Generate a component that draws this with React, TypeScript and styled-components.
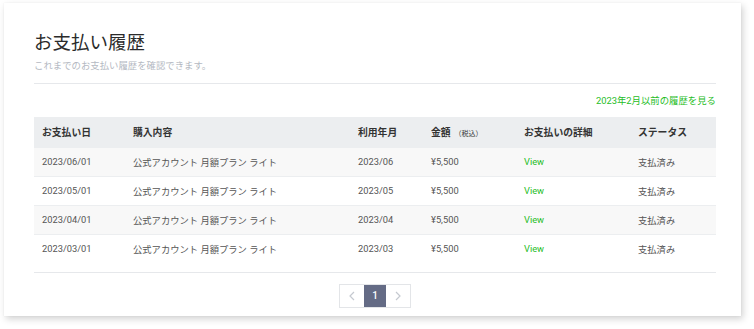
import React from "react";
import styled, { createGlobalStyle } from "styled-components";

const Global = createGlobalStyle`
  html, body { margin: 0; padding: 0; background: #ffffff; }
  body { font-family: Roboto, "Noto Sans CJK JP", sans-serif; }
`;

const Page = styled.div`
  width: 754px;
  height: 329px;
  padding: 3px 0 0 4px;
  box-sizing: border-box;
`;

const Card = styled.div`
  width: 737px;
  height: 313px;
  background: #fff;
  box-sizing: border-box;
  padding: 26px 25px 0 30px;
  box-shadow: 2px 3px 7px rgba(0, 0, 0, 0.18), 0 0 1px rgba(0, 0, 0, 0.08);
`;

const Title = styled.h1`
  margin: 0;
  font-size: 18.5px;
  font-weight: 400;
  color: #2b2b2b;
  line-height: 24px;
  font-family: "Noto Sans CJK JP", sans-serif;
`;

const Sub = styled.p`
  margin: 5px 0 0;
  font-size: 9.4px;
  line-height: 14px;
  color: #b4b9c2;
  font-family: "Noto Sans CJK JP", sans-serif;
`;

const Divider = styled.hr<{ $top: number }>`
  margin: ${(p) => p.$top}px 0 0;
  border: 0;
  border-top: 1px solid #e6e8eb;
`;

const LinkRow = styled.div`
  display: flex;
  justify-content: flex-end;
  margin-top: 9px;
  height: 16px;
`;

const GreenLink = styled.a`
  font-size: 9.4px;
  color: #1fbd1f;
  text-decoration: none;
  line-height: 16px;
`;

const Table = styled.table`
  margin-top: 8px;
  width: 100%;
  border-collapse: collapse;
  table-layout: fixed;
  font-size: 9.3px;
`;

const Th = styled.th<{ $w: number }>`
  width: ${(p) => p.$w}px;
  text-align: left;
  font-weight: 700;
  font-size: 9.8px;
  color: #333;
  background: #eceef0;
  height: 30px;
  padding: 0 0 0 8px;
  box-sizing: border-box;
  font-family: "Noto Sans CJK JP", sans-serif;
`;

const Small = styled.span`
  font-size: 7px;
  font-weight: 400;
  margin-left: 4px;
`;

const Tr = styled.tr<{ $alt: boolean }>`
  background: ${(p) => (p.$alt ? "#f8f8f8" : "#ffffff")};
  border-top: 1px solid #eceef0;
`;

const Td = styled.td<{ $green?: boolean }>`
  height: 28px;
  padding: 0 0 0 8px;
  color: ${(p) => (p.$green ? "#1fbd1f" : "#555")};
  font-family: Roboto, "Noto Sans CJK JP", sans-serif;
`;

const Pager = styled.div`
  display: flex;
  justify-content: center;
  margin-top: 11px;
`;

const PagerBox = styled.div`
  display: flex;
  border: 1px solid #e3e5e8;
  height: 22px;
`;

const PageBtn = styled.div<{ $active?: boolean }>`
  width: ${(p) => (p.$active ? 22 : 24)}px;
  display: flex;
  align-items: center;
  justify-content: center;
  background: ${(p) => (p.$active ? "#646b85" : "#fff")};
  color: ${(p) => (p.$active ? "#fff" : "#c5c9d0")};
  font-size: 10px;
  font-weight: 500;
`;

const rows = [
  ["2023/06/01", "2023/06"],
  ["2023/05/01", "2023/05"],
  ["2023/04/01", "2023/04"],
  ["2023/03/01", "2023/03"],
];

const Chevron = ({ dir }: { dir: "l" | "r" }) => (
  <svg width="6" height="10" viewBox="0 0 6 10">
    <path
      d={dir === "l" ? "M5 1 L1 5 L5 9" : "M1 1 L5 5 L1 9"}
      fill="none"
      stroke="#c5c9d0"
      strokeWidth="1.2"
    />
  </svg>
);

export default function App() {
  return (
    <Page>
      <Global />
      <Card>
        <Title>お支払い履歴</Title>
        <Sub>これまでのお支払い履歴を確認できます。</Sub>
        <Divider $top={11} />
        <LinkRow>
          <GreenLink href="#">2023年2月以前の履歴を見る</GreenLink>
        </LinkRow>
        <Table>
          <thead>
            <tr>
              <Th $w={91}>お支払い日</Th>
              <Th $w={225}>購入内容</Th>
              <Th $w={73}>利用年月</Th>
              <Th $w={93}>
                金額<Small>（税込）</Small>
              </Th>
              <Th $w={114}>お支払いの詳細</Th>
              <Th $w={86}>ステータス</Th>
            </tr>
          </thead>
          <tbody>
            {rows.map((r, i) => (
              <Tr key={r[0]} $alt={i % 2 === 0}>
                <Td>{r[0]}</Td>
                <Td>公式アカウント 月額プラン ライト</Td>
                <Td>{r[1]}</Td>
                <Td>¥5,500</Td>
                <Td $green>View</Td>
                <Td>支払済み</Td>
              </Tr>
            ))}
          </tbody>
        </Table>
        <Divider $top={9} />
        <Pager>
          <PagerBox>
            <PageBtn>
              <Chevron dir="l" />
            </PageBtn>
            <PageBtn $active>1</PageBtn>
            <PageBtn>
              <Chevron dir="r" />
            </PageBtn>
          </PagerBox>
        </Pager>
      </Card>
    </Page>
  );
}
